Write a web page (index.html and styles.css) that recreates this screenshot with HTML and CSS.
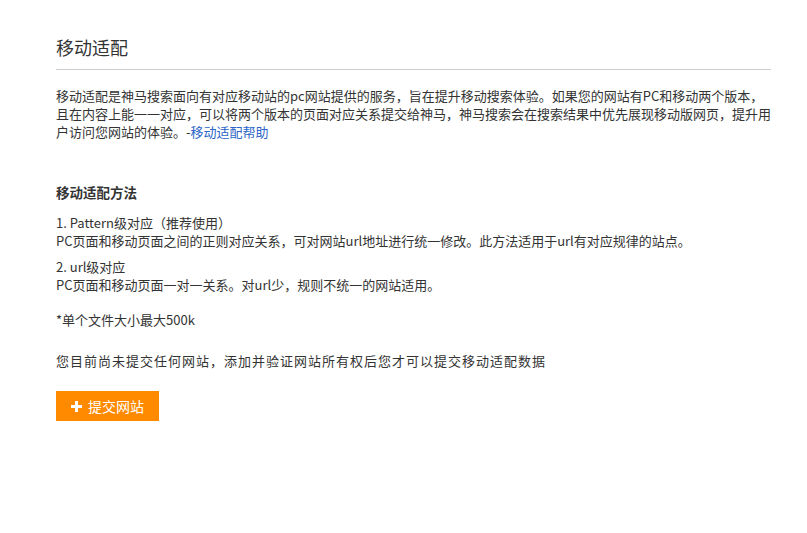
FILE: index.html
```html
<!DOCTYPE html>
<html lang="zh-CN">
<head>
<meta charset="utf-8">
<title>移动适配</title>
<link rel="stylesheet" href="styles.css">
</head>
<body>
<div class="page">
  <h1 class="title">移动适配</h1>
  <p class="intro">移动适配是神马搜索面向有对应移动站的pc网站提供的服务，旨在提升移动搜索体验。如果您的网站有PC和移动两个版本，且在内容上能一一对应，可以将两个版本的页面对应关系提交给神马，神马搜索会在搜索结果中优先展现移动版网页，提升用户访问您网站的体验。-<a class="link" href="#">移动适配帮助</a></p>
  <h2 class="sub">移动适配方法</h2>
  <div class="method">
    <p>1. Pattern级对应（推荐使用）</p>
    <p>PC页面和移动页面之间的正则对应关系，可对网站url地址进行统一修改。此方法适用于url有对应规律的站点。</p>
  </div>
  <div class="method second">
    <p>2. url级对应</p>
    <p>PC页面和移动页面一对一关系。对url少，规则不统一的网站适用。</p>
  </div>
  <p class="note">*单个文件大小最大500k</p>
  <p class="notice">您目前尚未提交任何网站，添加并验证网站所有权后您才可以提交移动适配数据</p>
  <button class="btn" type="button"><span class="plus"></span>提交网站</button>
</div>
</body>
</html>
```

FILE: styles.css
```css
html, body {
  margin: 0;
  padding: 0;
  background: #fff;
}
body {
  font-family: "Noto Sans CJK SC", "Noto Sans", sans-serif;
  color: #333;
  font-size: 13px;
}
.page {
  width: 715px;
  padding: 35px 0 0 56px;
}
p { margin: 0; }
.title {
  margin: 0;
  font-size: 18px;
  font-weight: normal;
  line-height: 24px;
  padding-bottom: 10px;
  border-bottom: 1px solid #ccc;
  color: #333;
}
.intro {
  margin-top: 17px;
  line-height: 18px;
}
.link {
  color: #2b65c8;
  text-decoration: none;
}
.sub {
  margin: 42px 0 0;
  font-size: 13.5px;
  font-weight: bold;
  line-height: 18px;
}
.method {
  margin-top: 13px;
  line-height: 18px;
}
.method.second { margin-top: 8px; }
.note {
  margin-top: 17px;
  line-height: 18px;
}
.notice {
  margin-top: 23px;
  line-height: 18px;
  letter-spacing: 1px;
}
.btn {
  margin-top: 21px;
  display: flex;
  align-items: center;
  gap: 6px;
  height: 30px;
  width: 103px;
  padding: 0 0 0 15px;
  border: 0;
  background: #ff8a00;
  color: #fff;
  font-family: inherit;
  font-size: 14px;
  cursor: pointer;
}
.plus {
  position: relative;
  width: 11px;
  height: 11px;
}
.plus::before, .plus::after {
  content: "";
  position: absolute;
  background: #fff;
}
.plus::before { left: 0; top: 4px; width: 11px; height: 3px; }
.plus::after { left: 4px; top: 0; width: 3px; height: 11px; }
```
